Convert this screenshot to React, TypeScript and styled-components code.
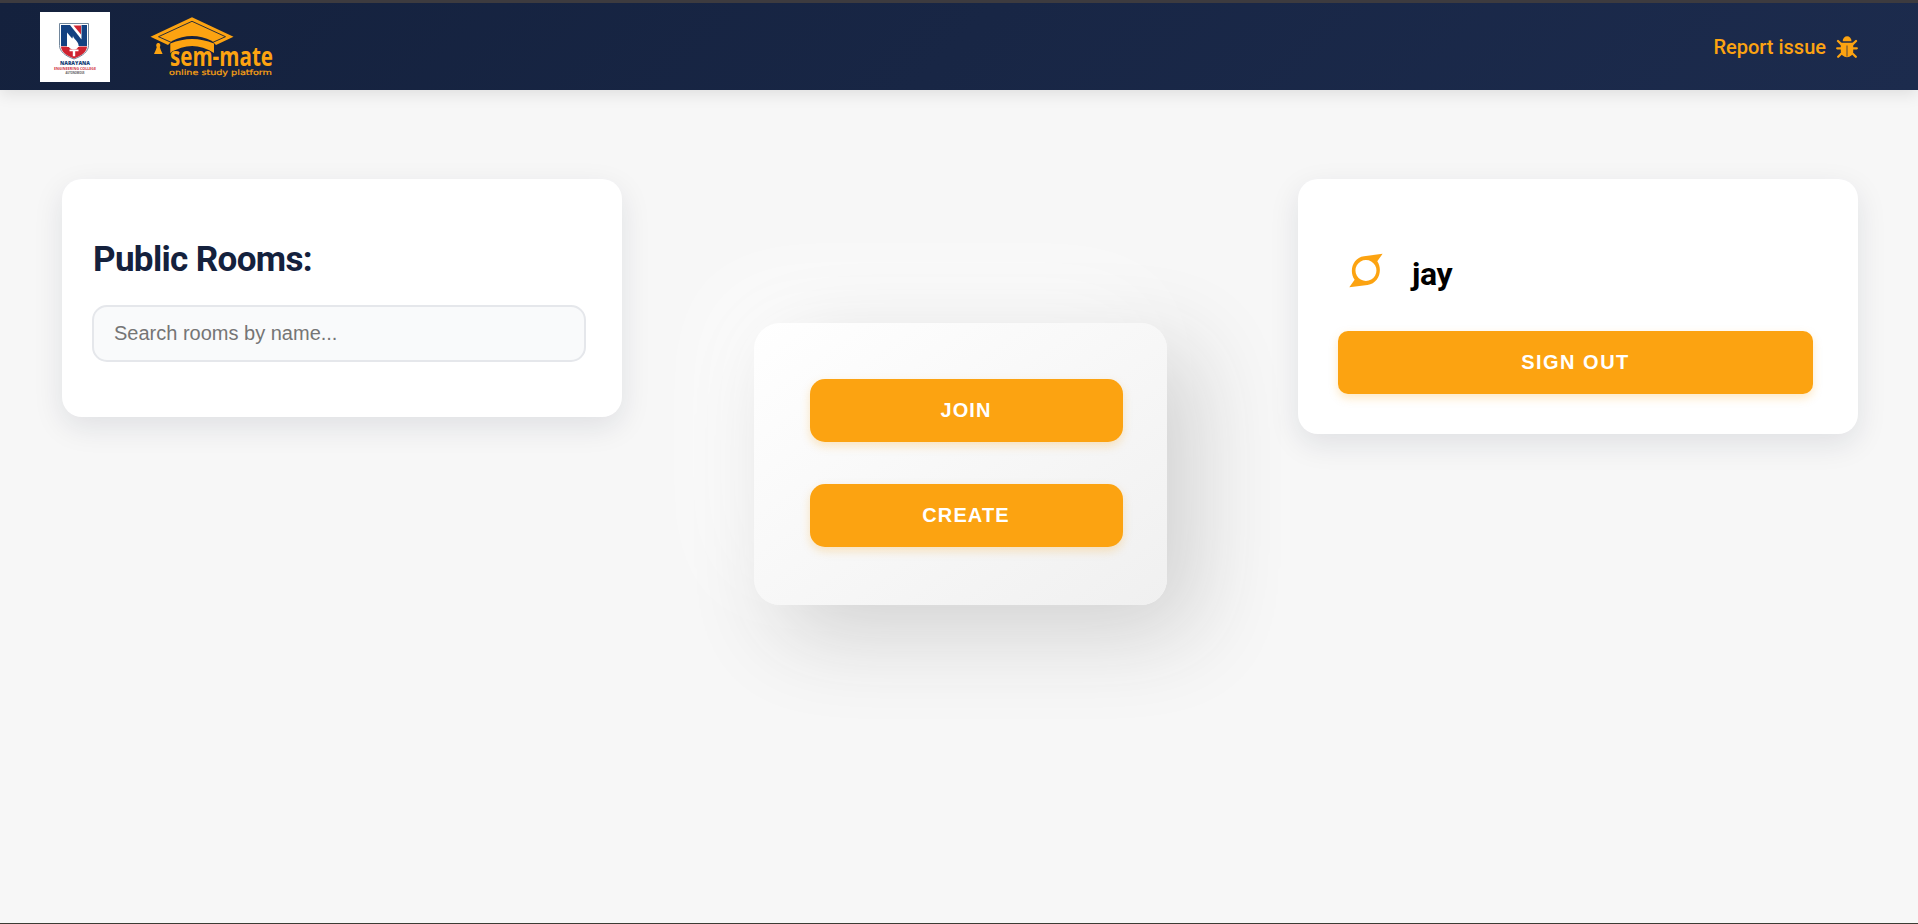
import React from "react";
import styled, { createGlobalStyle } from "styled-components";

const GlobalStyle = createGlobalStyle`
  *, *::before, *::after { box-sizing: border-box; }
  body { margin: 0; background: #f7f7f7; font-family: Roboto, sans-serif; }
`;

const Page = styled.div`
  display: flex;
  flex-direction: column;
  height: 924px;
  overflow: hidden;
  border-top: 3px solid #3d3b3f;
  border-bottom: 1px solid #3c3c34;
`;

const Header = styled.header`
  display: flex;
  align-items: center;
  flex: none;
  height: 87px;
  padding: 0 60px 0 40px;
  background: linear-gradient(135deg, #14213d 0%, #1c2b4d 100%);
  box-shadow: 0 4px 15px rgba(0, 0, 0, 0.1);
`;

const CollegeLogo = styled.svg`
  display: block;
  width: 70px;
  height: 70px;
  background: #fff;
`;

const BrandLogo = styled.svg`
  display: block;
  width: 170px;
  height: 70px;
  margin-left: 36px;
`;

const ReportLink = styled.a`
  display: flex;
  align-items: center;
  gap: 10px;
  margin-left: auto;
  color: #fca311;
  font-size: 20px;
  font-weight: 500;
  line-height: 24px;
`;

const BugIcon = styled.svg`
  display: block;
  width: 22px;
  height: 22px;
`;

const Main = styled.main`
  display: flex;
  align-items: flex-start;
  justify-content: space-between;
  padding: 89px 60px 0 62px;
`;

const Card = styled.section<{ $height: number; $padding: string }>`
  width: 560px;
  height: ${(p) => p.$height}px;
  padding: ${(p) => p.$padding};
  border-radius: 20px;
  background: #fff;
  box-shadow: 0 10px 30px rgba(20, 33, 61, 0.1);
`;

const Heading = styled.h1`
  margin: 0 0 0 1px;
  color: #14213d;
  font-size: 35px;
  font-weight: 700;
  letter-spacing: -0.65px;
  line-height: 42px;
`;

const SearchInput = styled.input`
  display: block;
  width: 494px;
  height: 57px;
  margin-top: 24px;
  padding: 0 20px 1px;
  border: 2px solid #e5e7eb;
  border-radius: 15px;
  background: #f9fafb;
  font-family: "Liberation Sans", Arial, sans-serif;
  font-size: 20px;
  &::placeholder { color: #757575; opacity: 1; }
`;

const ActionPanel = styled.section`
  display: flex;
  flex-direction: column;
  gap: 42px;
  width: 413px;
  height: 282px;
  margin-top: 144px;
  padding: 56px 44px 0 56px;
  border-radius: 26px;
  background: linear-gradient(145deg, #ffffff, #f0f0f0);
  box-shadow: 27px 27px 90px #d0d0d0, -27px -27px 90px #ffffff;
`;

const Button = styled.button<{ $width: number; $radius: number; $spacing: number }>`
  flex: none;
  display: block;
  width: ${(p) => p.$width}px;
  height: 63px;
  padding: 0;
  border: 0;
  border-radius: ${(p) => p.$radius}px;
  background: #fca311;
  box-shadow: 0 4px 10px rgba(252, 163, 17, 0.25);
  color: #fff;
  font-family: "Liberation Sans", Arial, sans-serif;
  font-size: 20px;
  font-weight: 700;
  letter-spacing: ${(p) => p.$spacing}px;
`;

const User = styled.div`
  display: flex;
  align-items: flex-start;
  gap: 29px;
  height: 78px;
  padding-left: 11px;
`;

const Avatar = styled.svg`
  display: block;
  width: 34px;
  height: 35px;
`;

const UserName = styled.h2`
  margin: 3px 0 0;
  color: #000;
  font-size: 32px;
  font-weight: 700;
  letter-spacing: -0.4px;
  line-height: 36px;
`;

function College() {
  return (
    <CollegeLogo viewBox="0 0 70 70">
      <path d="M19.500 11.500h29v22c0 6-6 10.500-14.500 13.500-8.500-3-14.500-7.500-14.500-13.500z" fill="#fff" stroke="#72879c" strokeWidth="1" />
      <path d="M21 13h26v21H21z" fill="#134181" />
      <path d="M21 34.500h26c0 5-5 9-13 12-8-3-13-7-13-12z" fill="#cf2431" />
      <path d="M30 13h11.500v14.500z" fill="#fff" />
      <path d="M33.500 13.500h7.500v9z" fill="#cf2431" />
      <path d="M27 20.500V35h12.500z" fill="#fff" />
      <path d="M33 23.500c0 3 5.500 6 5.500 9.500 0 2.500-1.500 4.500-4.500 4.500s-5.500-1.500-5.500-4.500c0-3.500 4.500-5 4.500-9.500z" fill="#fff" />
      <path d="M29.500 37.500h9v1.800h-3.300v5h-2.400v-5h-3.300z" fill="#fff" />
      <text x="35" y="53" textAnchor="middle" textLength="30" lengthAdjust="spacingAndGlyphs" fontFamily="Open Sans, sans-serif" fontWeight="800" fontSize="5.6" fill="#173f76">NARAYANA</text>
      <text x="35" y="57.700" textAnchor="middle" textLength="42" lengthAdjust="spacingAndGlyphs" fontFamily="Open Sans, sans-serif" fontWeight="700" fontSize="3.6" fill="#cf2f3b">ENGINEERING COLLEGE</text>
      <text x="35" y="61.700" textAnchor="middle" textLength="19" lengthAdjust="spacingAndGlyphs" fontFamily="Open Sans, sans-serif" fontWeight="700" fontSize="2.800" fill="#555">AUTONOMOUS</text>
    </CollegeLogo>
  );
}

function Brand() {
  return (
    <BrandLogo viewBox="0 0 170 70">
      <g fill="#fca311">
        <path d="M4.500 24.700 46 5.300 87.500 24.700 70 33 66 29Q46 19 26 29L22 33z" />
        <path d="M24.300 31.500Q46 22.500 68 31.500V41Q46 27 24.300 41z" />
        <path d="M12.300 31c2 0 2.600 2.500 1.500 4l1 3 1.800 4H8l1.800-4 1-3c-1.100-1.500-.5-4 1.500-4z" />
      </g>
      <path d="M25.500 30.500 12.500 24.700 46 9.300 79.500 24.700 66.500 30.500" fill="none" stroke="#14213d" strokeWidth="0.900" />
      <text x="24" y="54" textLength="103" lengthAdjust="spacingAndGlyphs" fontFamily="Open Sans, sans-serif" fontSize="26" fontWeight="700" fill="#fca311" stroke="#14213d" strokeWidth="1" paintOrder="stroke">sem-mate</text>
      <text x="23" y="62.700" textLength="103" lengthAdjust="spacingAndGlyphs" fontFamily="DejaVu Sans, sans-serif" fontSize="7.600" fill="#fca311" stroke="#fca311" strokeWidth="0.200">online study platform</text>
    </BrandLogo>
  );
}

function Bug() {
  return (
    <BugIcon viewBox="0 0 22 22">
      <path d="M6.700 5.300a4.400 5 0 0 1 8.800 0z" fill="#fca311" />
      <path d="M2 5 6 8.800M20 5 16 8.800M1.200 12.300h19.600M2.200 20.700 6 17M19.800 20.700 16 17" fill="none" stroke="#fca311" strokeWidth="2.300" strokeLinecap="round" />
      <path d="M4.800 6.700h12.400v9a6.200 5.500 0 0 1-12.400 0z" fill="#fca311" />
      <path d="M11 9.500v11" stroke="#8c652f" strokeWidth="1.500" />
    </BugIcon>
  );
}

export default function App() {
  return (
    <>
      <GlobalStyle />
      <Page>
        <Header>
          <College />
          <Brand />
          <ReportLink>
            Report issue
            <Bug />
          </ReportLink>
        </Header>
        <Main>
          <Card $height={238} $padding="60px 30px 0">
            <Heading>Public Rooms:</Heading>
            <SearchInput placeholder="Search rooms by name..." />
          </Card>
          <ActionPanel>
            <Button $width={313} $radius={15} $spacing={1.1}>JOIN</Button>
            <Button $width={313} $radius={15} $spacing={1.1}>CREATE</Button>
          </ActionPanel>
          <Card $height={255} $padding="74px 40px 0">
            <User>
              <Avatar viewBox="0 0 34 35">
                <path
                  fillRule="evenodd"
                  fill="#fca311"
                  d="M33.600.800 28.300 8.200C34 17 30 30.500 18.500 32L.300 34.200 5.600 26.800C-.5 18 4 4.500 15 3.200zM16.900 7a10.500 10.500 0 1 0 .1 0z"
                />
              </Avatar>
              <UserName>jay</UserName>
            </User>
            <Button $width={475} $radius={10} $spacing={1.5}>SIGN OUT</Button>
          </Card>
        </Main>
      </Page>
    </>
  );
}
